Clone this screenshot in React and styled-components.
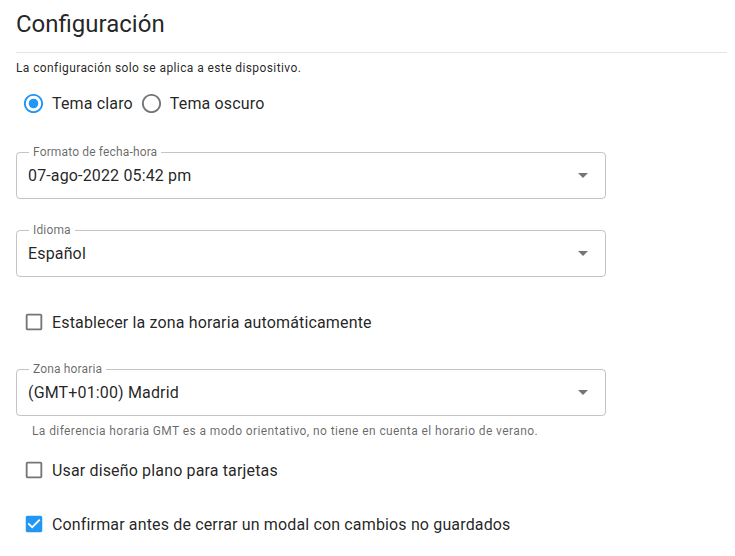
import React from 'react'
import styled, { createGlobalStyle } from 'styled-components'

const blue = '#2196f3'
const text = 'rgba(0, 0, 0, 0.87)'
const muted = 'rgba(0, 0, 0, 0.6)'
const iconGrey = 'rgba(0, 0, 0, 0.54)'

const GlobalStyle = createGlobalStyle`
body {
  margin: 0;
  background: #fff;
  font-family: Roboto, "Liberation Sans", sans-serif;
  color: ${text};
}
`

const Page = styled.div`
padding: 8px 8px 0 16px;
display: flex;
flex-direction: column;
`

const Title = styled.h1`
margin: 0;
font-size: 24px;
line-height: 32px;
font-weight: 400;
`

const Divider = styled.hr`
margin: 12px 0 0 0;
border: none;
height: 1px;
background: #e4e4e4;
`

const Subtitle = styled.p`
margin: 7px 0 0 0;
font-size: 12px;
line-height: 16px;
letter-spacing: 0.4px;
`

const RadioGroup = styled.div`
margin-top: 6px;
height: 42px;
display: flex;
align-items: center;
gap: 7px;
padding-left: 6px;
`

const ControlLabel = styled.label`
display: inline-flex;
align-items: center;
gap: 7px;
font-size: 16px;
letter-spacing: 0.15px;
cursor: pointer;
`

const CheckRow = styled(ControlLabel)`
height: 42px;
margin-top: ${(p) => p.top}px;
padding-left: 7px;
`

const Field = styled.div`
position: relative;
margin-top: ${(p) => p.top}px;
width: 590px;
height: 47px;
box-sizing: border-box;
border: 1px solid rgba(0, 0, 0, 0.23);
border-radius: 4px;
display: flex;
align-items: center;
padding: 0 11px;
`

const FieldLabel = styled.span`
position: absolute;
top: -9px;
left: 12px;
padding: 0 4px;
background: #fff;
font-size: 12px;
line-height: 16px;
letter-spacing: 0.15px;
color: ${muted};
`

const Value = styled.span`
flex: 1;
font-size: 16px;
line-height: 20px;
letter-spacing: 0.15px;
`

const Arrow = styled.span`
width: 0;
height: 0;
margin-right: 6px;
border-left: 5px solid transparent;
border-right: 5px solid transparent;
border-top: 5px solid ${iconGrey};
`

const Helper = styled.p`
margin: 7px 0 0 16px;
font-size: 12px;
line-height: 16px;
color: ${muted};
letter-spacing: 0.4px;
`

function Radio({ checked }) {
    return (
        <svg width="23" height="23" viewBox="0 0 24 24" fill={checked ? blue : iconGrey}>
            <path d="M12 2C6.48 2 2 6.480 2 12s4.48 10 10 10 10-4.48 10-10S17.52 2 12 2zm0 18c-4.42 0-8-3.58-8-8s3.58-8 8-8 8 3.58 8 8-3.58 8-8 8z" />
            {checked && <circle cx="12" cy="12" r="5" />}
        </svg>
    )
}

function Checkbox({ checked }) {
    if (checked) {
        return (
            <svg width="22" height="22" viewBox="0 0 24 24" fill={blue}>
                <path d="M19 3H5c-1.11 0-2 .9-2 2v14c0 1.1.89 2 2 2h14c1.11 0 2-.9 2-2V5c0-1.1-.89-2-2-2zm-9 14l-5-5 1.41-1.41L10 14.17l7.59-7.59L19 8l-9 9z" />
            </svg>
        )
    }
    return (
        <svg width="22" height="22" viewBox="0 0 24 24" fill={iconGrey}>
            <path d="M19 5v14H5V5h14m0-2H5c-1.1 0-2 .9-2 2v14c0 1.1.9 2 2 2h14c1.1 0 2-.9 2-2V5c0-1.1-.9-2-2-2z" />
        </svg>
    )
}

function Select({ label, value, top }) {
    return (
        <Field top={top}>
            <FieldLabel>{label}</FieldLabel>
            <Value>{value}</Value>
            <Arrow />
        </Field>
    )
}

export default function App() {
    return (
        <>
            <GlobalStyle />
            <Page>
                <Title>Configuración</Title>
                <Divider />
                <Subtitle>La configuración solo se aplica a este dispositivo.</Subtitle>
                <RadioGroup>
                    <ControlLabel><Radio checked />Tema claro</ControlLabel>
                    <ControlLabel><Radio />Tema oscuro</ControlLabel>
                </RadioGroup>
                <Select top={28} label="Formato de fecha-hora" value="07-ago-2022 05:42 pm" />
                <Select top={31} label="Idioma" value="Español" />
                <CheckRow top={24}><Checkbox />Establecer la zona horaria automáticamente</CheckRow>
                <Select top={26} label="Zona horaria" value="(GMT+01:00) Madrid" />
                <Helper>La diferencia horaria GMT es a modo orientativo, no tiene en cuenta el horario de verano.</Helper>
                <CheckRow top={10}><Checkbox />Usar diseño plano para tarjetas</CheckRow>
                <CheckRow top={12}><Checkbox checked />Confirmar antes de cerrar un modal con cambios no guardados</CheckRow>
            </Page>
        </>
    )
}
